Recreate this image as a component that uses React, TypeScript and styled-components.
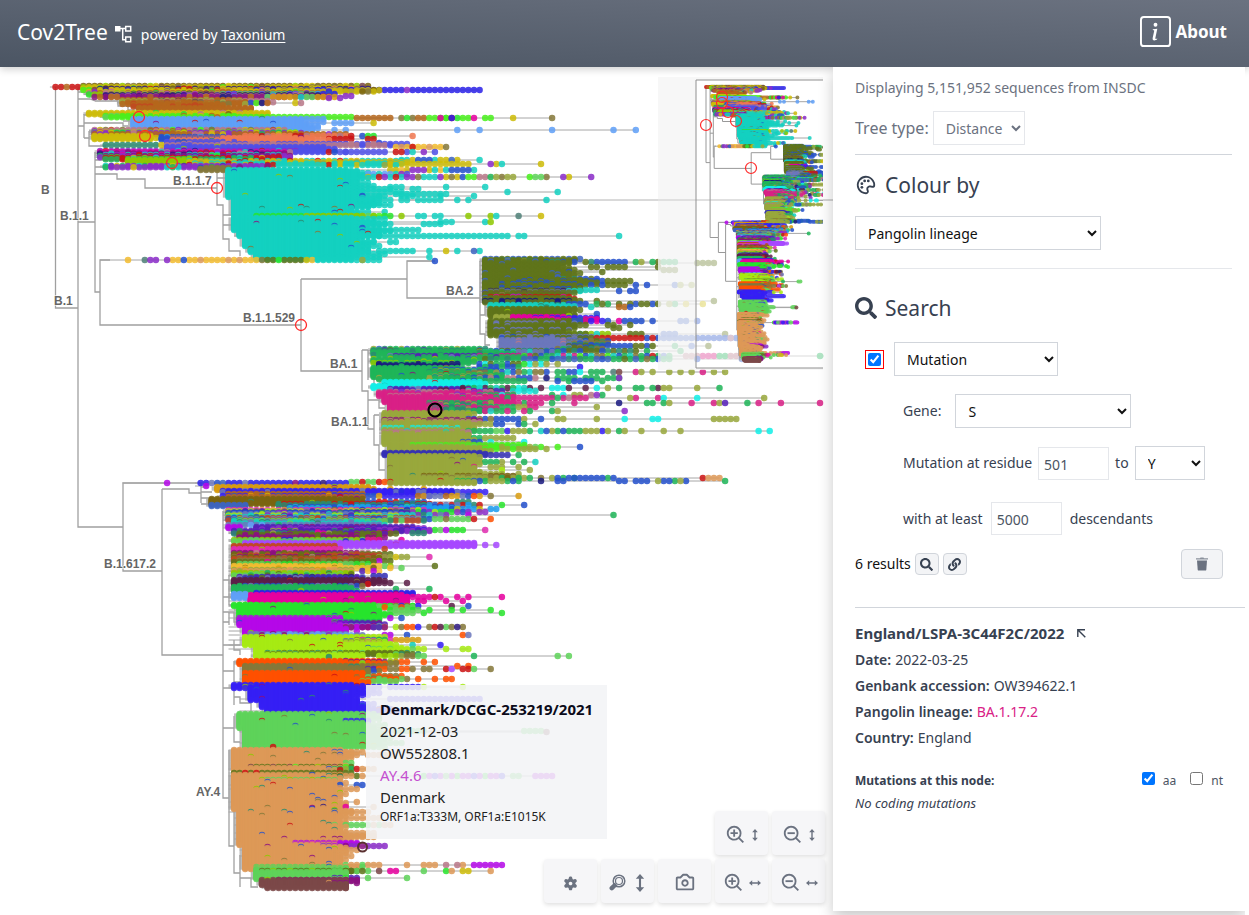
import React, { useState } from "react";
import styled, { createGlobalStyle, css } from "styled-components";
import { FaSearch, FaLink } from "react-icons/fa";
import { BiPalette, BiCamera, BiZoomIn, BiZoomOut } from "react-icons/bi";
import { BsInfoSquare } from "react-icons/bs";
import { TiCog } from "react-icons/ti";

/* ---------- tree data ---------- */

const COL = 5.58;
const ROOT_X = 55.5;
const ROOT_Y = 87;

const colours: Record<string, string> = {
  t: "#14d0c0", o: "#5f741b", g: "#20b558", p: "#d92186", a: "#98a83c",
  c: "#12efe6", y: "#cdbc08", b: "#5f9ff7", B: "#2b22e8", n: "#2450cc",
  v: "#5520b8", P: "#8b2cc8", M: "#b408e8", m: "#e6009e", G: "#28e42c",
  l: "#a6ea14", O: "#ff5000", k: "#85783a", S: "#3520f5", s: "#5ed35a",
  T: "#dd9857", R: "#cc1414", w: "#7c4848", W: "#5c2048", d: "#301a80",
  z: "#7a6410", Z: "#b4661c", Y: "#d89c10", f: "#f2bc30", q: "#6b77bc",
  i: "#4f50e8", j: "#2a8a70", r: "#f07850", x: "#4f8078", e: "#48f01c",
  L: "#a648ff", h: "#1c9cf0", u: "#b87888", N: "#1a1a80", D: "#3430b4",
  E: "#8ec800", H: "#8a1080", X: "#c04820", Q: "#3c64c0", A: "#e02cb0",
};

/* Dense clades: top, bottom, first column, last column, ragged edge, colours */
const clades = [
  "87 87 0 4 0 RZRRR", "86 90 5 52 6 yyyzekwEy", "89 92 8 56 4 yydrBRzk",
  "90 91 36 76 0 BBBBNBPz", "92 95 6 44 5 yEoPGZu", "94 97 9 47 4 dHhNvPu",
  "94 95 30 50 3 hhBhn", "97 98 7 40 6 dHPZyN", "97 98 38 49 2 tssaY",
  "100 104 12 32 4 ZkZZa", "101 103 18 38 4 uHGZN", "104 107 14 28 8 ZZZXZ",
  "108 109 15 34 3 ZZ", "113 115 6 34 16 yuyGyz", "116 118 9 30 8 yseGeZ",
  "117 118 30 53 0 eeGeeme", "118 118 54 60 0 ZZY", "119 127 14 44 6 bbbbb",
  "128 130 16 46 5 bbb", "130 133 7 40 12 yuXePyk", "133 135 7 44 14 uyZPrg",
  "136 139 7 17 2 yy", "137 140 19 28 4 hn", "136 137 34 53 4 RrRug", "138 142 21 44 6 rrrr",
  "142 143 20 30 8 nrij", "145 146 9 19 0 yjjjj", "144 146 20 60 6 iuiuu",
  "147 152 20 48 6 iiii", "151 155 8 40 6 PdRutHm", "156 158 8 42 8 HPvRGg",
  "158 160 9 36 16 RyEtgR", "159 162 13 24 4 EEE", "161 166 24 60 8 yyyyaytR",
  "166 168 9 30 20 PHvyPtg", "168 170 26 31 0 kk",
  "170 190 31 52 8 tttttt", "191 197 31 52 9 tttttt", "198 215 32 52 8 tttttt",
  "216 217 36 60 0 EesGE", "218 230 32 52 8 tttttt", "231 236 33 55 8 tttttt",
  "237 246 34 53 8 tttttt", "247 252 35 54 11 tttttt", "253 259 36 52 8 tttttt",
  "259 300 77 90 5 ooooooooooQ", "260 262 77 88 4 oooja", "280 290 80 93 7 oooon",
  "291 293 78 92 2 qoqdo", "294 296 77 90 3 ooouH", "297 298 78 92 0 RuRmR", "299 301 77 92 4 oooo",
  "301 303 77 92 3 NoNo", "305 308 78 91 3 tjtt", "309 316 78 91 4 ooooo",
  "317 318 79 81 0 a", "317 320 82 91 0 mm", "318 320 86 96 2 mmSno", "321 336 78 91 5 oooooooq",
  "337 339 80 95 4 qqoqn", "340 349 80 91 5 qqqqqu", "341 348 92 98 3 oojnk",
  "349 351 57 76 12 gjvagQo", "351 356 57 74 10 gggjg", "356 358 60 84 6 vggqv",
  "359 363 57 74 9 gEggg", "364 367 58 70 9 NNNgN", "368 377 57 72 5 ggggg",
  "370 379 68 76 6 gnakg", "378 380 58 76 6 gggga", "382 388 59 73 6 ccccc",
  "386 388 57 59 0 c", "389 391 60 74 3 WvWqp", "392 396 58 76 8 pppPu",
  "397 402 59 78 6 pppppp", "402 411 60 69 1 pppppp", "403 411 67 76 4 gpjap",
  "413 430 59 74 3 aaaaaaa", "420 423 59 75 2 ruaHa", "431 434 59 74 1 auaut",
  "428 430 59 72 0 caqc", "435 444 59 74 1 aaaaa", "445 447 64 80 6 eeees",
  "446 452 60 76 2 aaaaa", "453 455 59 74 6 DDDD", "456 483 60 75 2 aaaaaaa", "476 478 66 82 2 azka",
  "483 484 26 52 6 QvHqdnB", "482 483 53 60 0 RsRO", "487 490 29 56 4 YYYY",
  "491 493 30 70 4 SBSBq", "494 497 31 55 2 ZZZZ", "496 497 30 66 3 ZYnZyS",
  "499 504 28 54 2 zzzz", "505 506 28 34 0 Q", "504 506 40 66 6 jnjRoj",
  "507 510 42 70 4 hhnhth", "510 513 31 62 6 DvqrkAl", "513 518 31 60 10 qjlvPtn",
  "518 521 31 64 3 njqsnX", "521 524 32 54 6 tjtsq", "525 525 31 58 4 qtbgs",
  "527 528 31 33 0 M", "527 531 36 64 9 vvHvP", "531 534 32 56 6 jaojvm",
  "535 538 33 57 3 HHHoH", "540 542 32 55 4 ssEBs", "543 546 34 75 0 LLLL",
  "546 548 32 48 2 XXX", "549 552 32 48 4 AAAA", "553 557 32 56 5 zokuXH",
  "558 563 32 54 6 zkXmok", "564 565 32 56 2 GoGs", "566 569 32 50 2 ffYf", "568 568 33 56 4 fzof",
  "570 572 32 53 5 YTETa", "573 576 32 51 5 EgoEs", "577 579 33 54 4 ovdDq",
  "580 584 32 55 6 WWWW", "586 587 33 54 2 qgn", "587 591 32 52 3 ggg",
  "593 594 36 64 0 BBB", "595 602 35 62 4 mmmmm", "594 598 32 34 0 b",
  "605 606 32 36 0 G", "605 619 33 57 5 GGGGGG", "606 608 58 64 2 sGOs",
  "618 625 33 51 2 MMMMM", "626 633 34 51 2 MMMMM", "622 628 50 58 1 MgqvH", "634 636 35 52 10 qHPqb",
  "637 645 34 57 5 lllll", "640 645 52 58 1 lAQkl", "646 652 36 59 5 lllll", "653 655 38 62 3 josj", "654 657 36 54 3 lllll",
  "661 664 33 56 4 OOOO", "662 664 53 60 4 OkHs", "666 672 34 56 4 kkkk", "673 683 34 54 4 OOOOO", "676 682 54 60 3 OkOs",
  "685 688 32 52 5 SSSS", "687 700 35 53 7 SSSSS", "701 707 37 54 5 SSSS", "708 713 38 56 6 SSSS",
  "714 728 33 55 5 sssss", "729 747 34 57 4 sssss", "721 722 52 56 1 S",
  "750 758 32 50 5 TTTTTT", "759 770 32 50 3 TTTTTT", "767 768 35 53 2 Eweo", "773 774 32 53 0 oooRd",
  "775 800 32 50 3 TTTTTT", "780 781 37 50 1 EsEs", "801 809 32 50 4 TTTTTT", "810 830 33 50 4 TTTTTT",
  "831 845 33 50 3 TTTTTT", "836 837 49 57 1 TTT", "846 869 34 50 3 TTTTTT",
  "843 845 43 54 1 MHMA", "867 879 36 52 1 sssss", "871 872 37 54 1 oooE", "880 881 40 54 1 HHHH",
  "880 885 37 52 0 wwwww", "886 888 38 52 0 wwwww",
];

/* Long tip rows: height, column the branch starts at, dots */
const tips = [
  "103 34 35n 36e 37N 38Z 43y 44u", "118 34 62-71ekmGRZ 69-73GeB 74e 75m 77e 78e 82y 89k",
  "98 50 49P 51P", "96 48 52P 53P", "123 44 50-53b 57y", "130 44 50b 52b 72b 76b 89b 100b 104b",
  "136 50 55n 56-57G 64r", "139 46 49-53R 56-57R", "143 56 58n", "147 60 61-69fffTf 64R 70k", "152 48 52-59i 61-63iR 64t 66P 68i",
  "160 56 62-71nyQt 72y 76t", "164 56 60-74y 78P 79y 80t 87y", "170 50 60-70tyPf 70-75tn",
  "177 40 56-64yPRt 65-71tnPyk 72y 73n 74-75e 76-77Ru 78g 79-82ak 85-87yes 88k 91P 92y 96P",
  "174 44 56-63Ptib", "187 44 60-62t 70t 77t", "189 44 50-60t 64-65t", "192 44 54-62t 81t 90t", "194 44 61-70t", "196 40 58t 62-64t 69t 75t",
  "200 50 54-60t 62-63t 65-69t 72t 74t 88t", "205 40 54-57t 60t", "212 40 54-56t 59t",
  "216 33 46-55E 57E 62E 65-66t 68-69t 74E 78E 79t 83x 87y", "222 40 69-71t 77t 78E", "224 40 56-60t 66-69t",
  "230 40 54-60t 61-65t", "236 32 52-81t 83-84t 101t", "242 40 54-57t 60-61t", "251 40 58-64t 67t 70y 72t 75Q 76t",
  "257 40 56-58t 67t", "260 8 13f 16x 17-18P 20P 21-22f 23n 24-36ffffTf 37k 38-39o 40G 41-44o 45y 46f 47-58t 55a", "261 63 68n",
  "262 77 88-92noj 93n 95-97onj 98-102n 104g 105a 107g 108o 109-111g", "263 85 115-118o", "267 85 96-97o 99-102o 108o", "270 85 92-93o 109-111o", "272 80 90-92on 98o",
  "279 84 91-97ojn", "281 84 92-99on 100-103o", "285 84 94-98on 99-102o 104n 106n 111n 112a 114a", "290 84 94-97t", "291 84 92-94t 101n 103n 104n",
  "299 84 93R", "301 84 97o 118o", "304 84 92-95on 97-99og 101o 103-108on 110a 111g 113y 116y", "307 84 96t 101-102Z 103n", "314 84 97n",
  "321 84 88-92mo 93-99mSmn 101m 102-105n 107n 112-113n 115n", "325 84 93-95o 99-100o 103o", "328 84 92-93o 100-101o",
  "334 80 90-99ontE 103-105o 109-111n 120o", "338 80 90-96non 97-105R 106n 107R 108-123n 121u",
  "346 80 92-96on 100-103n 104-107on 111g 114n 117o", "349 80 90-98gjok", "351 70 76-104onj 106g 112g", "352 70 76-90qgtyn",
  "356 64 76-105gneotkpg 106-108Rgn 109n 110g 113-115gup 116-118p 119-120g 121-125up 137g", "359 64 74-104ngQjog 105-110ngk 115n 123n",
  "364 66 76-83gnoc 84-88caG 90a", "367 66 76-83gn 94S", "372 64 74-88gankt 90-93gn 94c 96-98g 100x 101w 104p 105a 107a 110a 112a 114a 116p 118a 120a",
  "378 64 74-86gnu 88N 90-93gn 95-97g 99-101g 101P", "381 64 70-84gng 90n 92-96ngn 98g", "388 64 72-85tcWg 87W 89-92Wgcc 95W 97c 99a 101g 104-105g 107g 108W 109-110a 115a 119g",
  "391 64 74-80vcWt 82-86ct", "395 64 76-82cg 89g 91c 93-94a 96-97uP 98g", "398 64 72-95ppppgu 103a 104p 108p 109c 115c 127a",
  "403 64 72-87ppgpa 89g 93p 101N 106-107g 109g 110a 114p 118p 119a 120v 124g 126p 130p 137p", "407 64 72-82gpg 83-86pa 97a",
  "411 64 74-82gpt 84-85pg 89g 90a 102P", "419 66 74-84ankn 87n 90-91a 97a 102c 107c 108c 118-122a", "424 66 76-80an 83n 84g 86a",
  "431 64 74-80gegs 81S 82-85ag 87t 88-93anag 94g 95-97a 98S 99a 101g 102a 105a 109a 112a 126c 128c", "438 60 75-79ag 80-82a", "442 60 73-76n 78c 84c",
  "447 62 74-87eesa 90e 94n", "449 62 76-86eea 88a", "455 60 74-81D 83g", "462 62 76-80ag 82g 84g 86t", "467 62 75p 78-80a 83a", "470 62 80l 85a",
  "474 62 76-80a 83a", "478 60 74-78ak 79-85azg 87k 89a 90-93ng 93-98n 99g 100n 116R 117-119T", "481 60 72-76ng 77-83agn 87N 90-91n 101-102n 104-106n 108a 109-110n 111g 112a 113n 120g",
  "483 12 20M", "486 25 27M", "489 56 60Y 66Y", "492 56 59-70SnSB 71-77S", "496 56 66-74ZnYq 75O 76Y 78k 83Y",
  "502 50 56-66nRjq 72-74j", "505 44 54-76nqhjR 80G 84n", "509 44 56-76hhnyh 78-79h", "512 44 54-70lARnGPh 71-74nPG 76-77P",
  "515 31 56-70jvPtq 74M 100g", "519 31 54-67nnnl 68-74ssk 75R 78O", "530 31 54-67vSPn 68-73sGM 77A", "533 31 58-60Rm 64-66j",
  "540 31 56-58m 62m", "545 31 60-75L 77L 79L", "549 31 59X", "557 31 55-60kXa 61-63ya 67A", "561 31 56-60okM", "566 31 55-60fEs 68o",
  "568 31 60f 62s", "571 31 55-58fMv", "576 31 57-59D", "583 31 56-60W 63W", "586 31 55k", "589 31 61g 67g",
  "597 31 62-65m 66-69mRm 72m 74m 80m", "601 31 65-66m 70m 73m", "606 31 60-65GkS 71W 74n", "610 31 60-65sG 67G 71G 73G 78G",
  "613 31 60-64s 66G 80G", "618 31 60M 62n", "627 31 52-57umM 58s 59f 61l 62k 63-64O 65S 67k 68R 69W 70s 71k 72d 73k",
  "631 31 54M", "635 31 59-60M 63n 73O 74q", "640 31 55-60gAQ 61-65Y", "645 31 58-61l 64t 69S", "649 31 55-66lls 70l 73-74l",
  "656 35 58-66asEkl 75g 90s 92s", "662 32 60-63Oly 66O 68O", "666 33 72O 74O", "669 33 56-60kvO 61-64kOk 66-67k 70R 71L 73-74R 75s 78k", "679 33 56-63OOks 65O 68O 70-71O",
  "687 33 60-66SlS 73l", "699 33 60-76SSS", "711 33 60-64S", "731 33 61-66s 84-87s", "732 33 88w", "743 33 58-62s",
  "752 33 50-53TQ 55T", "755 33 51n 56-60T", "763 33 52-53s", "769 31 49n 50-53sga 54R 55-57T", "776 31 50-55Toz 66-80MsGMS 82-83s 86-89M",
  "785 31 51n 54-55nT", "789 31 52-54T", "802 31 48n 54T", "807 31 48d 50-52mT 57T", "812 31 52-56T", "818 32 50-58T",
  "825 32 49j 50s 52-60Ts", "833 32 50-57T", "839 32 48-52TH 53T", "846 33 48-56PPHM 57-59P", "850 33 49n 52-54T", "856 33 50-53T",
  "865 35 52-55sT 56-58Ts 63T 66-68T 70u 72-73Tu 75-79M 80M", "867 35 49n 50-55ToTs", "871 35 50-56soss 58w 60m 61m 66s 70G 71T 73-74y 78T",
  "878 35 50-54kGv 56s 63s", "883 38 49T 50-52H 54H", "888 38 52w",
];

/* Elbow branches, as absolute moves on the tree plane */
const branches =
  "M55.5 87V308H78M78 88V527H123V483H201V503M123 527V571H162M162 489V655H223V798H229M162 489H189V493H201" +
  "M78 99H90L95 101M78 126H84M84 114V138M84 123H123V126H128M84 115H92M84 138H89V131M89 138V146H106" +
  "M95 101H118V106H128V110H134M78 88V92H86M123 121H130M89 131H95" +
  "M78 222H95M95 152V292H100V260H110M100 292V325H301M301 279V371H362M301 279H407V261H435M407 279V298H480V261M480 298V334H485V345H490M480 315H485V300" +
  "M95 174H117V179H145V188H217M217 172V205H223V239H229V251H240V256M95 160H105M95 167H108M217 178H228M223 215H234M223 225H234" +
  "M362 350V391H368V429H374V445H379V470H385M362 350H368M368 350V380M374 375V385H379M374 415V429M368 400H379V408H385M368 400V391M374 415H379" +
  "M201 487H208M201 492H212M201 498H215M201 504H215M223 511V655M229 575V605M229 605H234M229 612H234V622H240M229 625V612M234 640V650H240V655M223 645H240" +
  "M223 671H234V661M234 671V682H240M223 688H234V697H240V703H251V711M223 728H234V716M234 728V742H240M234 705V697" +
  "M229 750V846H234V855M234 810V873H240V887M240 855V878H251V887H258M223 580H229M223 597H234M223 612H229M223 622H229";

type Dot = { col: number; key: string };
type Row = { y: number; from: number; dots: Dot[] };

function makeRandom(seed: number) {
  let s = seed;
  return () => {
    s = (s * 1664525 + 1013904223) % 4294967296;
    return s / 4294967296;
  };
}

function buildRows(): Row[] {
  const rnd = makeRandom(41);
  const rows: Row[] = [];
  clades.forEach((line) => {
    const [a, b, c, d, e, keys] = line.split(" ");
    const [top, bottom, first, last, ragged] = [a, b, c, d, e].map(Number);
    const solid = new Set(keys).size === 1;
    for (let y = top; y <= bottom; y += solid ? 1 : 1.3) {
      const end = last + Math.round(ragged * rnd() * rnd());
      const main = keys[Math.floor(rnd() * keys.length)];
      const dots: Dot[] = [];
      for (let col = first; col <= end; col += 1) {
        const late = (col - first) / (end - first + 1);
        let key = main;
        if (solid) {
          if (rnd() < 0.01 + late * late * late * 0.03) key = "nkEHjR"[Math.floor(rnd() * 6)];
        } else if (rnd() < 0.4) key = keys[Math.floor(rnd() * keys.length)];
        dots.push({ col, key });
      }
      rows.push({ y, from: first - 1, dots });
    }
  });
  tips.forEach((line) => {
    const [y, from, ...tokens] = line.split(" ");
    const dots: Dot[] = [];
    tokens.forEach((token) => {
      const m = /^(\d+)(?:-(\d+))?([A-Za-z]+)$/.exec(token);
      if (!m) return;
      const first = Number(m[1]);
      const last = Number(m[2] || m[1]);
      for (let col = first; col <= last; col += 1) {
        dots.push({ col, key: m[3][Math.floor(rnd() * m[3].length)] });
      }
    });
    rows.push({ y: Number(y), from: Number(from), dots });
  });
  return rows.sort((p, q) => p.y - q.y);
}

const rows = buildRows();

type Scale = { x: (v: number) => number; y: (v: number) => number; dot: number };

const mainScale: Scale = { x: (v) => v, y: (v) => v, dot: 6.5 };
const miniScale: Scale = {
  x: (v) => 706 + (v - ROOT_X) * 0.184,
  y: (v) => 87 + (v - ROOT_Y) * 0.342,
  dot: 4,
};

const TreeDots = ({ scale }: { scale: Scale }) => {
  const px = (col: number) => scale.x(ROOT_X + col * COL).toFixed(1);
  const lines = rows
    .map((r) => {
      const end = Math.max(...r.dots.map((d) => d.col));
      return `M${px(r.from)} ${scale.y(r.y).toFixed(1)}H${px(end)}`;
    })
    .join("");
  return (
    <g fill="none">
      <path d={lines} stroke="#a6a6a6" strokeWidth={1} />
      {rows.map((r, i) => {
        const byKey: Record<string, string> = {};
        r.dots.forEach((d) => {
          byKey[d.key] = (byKey[d.key] || "") + `M${px(d.col)} ${scale.y(r.y).toFixed(1)}h0`;
        });
        return Object.keys(byKey).map((key) => (
          <path
            key={`${i}${key}`}
            d={byKey[key]}
            stroke={colours[key]}
            strokeOpacity={0.86}
            strokeWidth={scale.dot}
            strokeLinecap="round"
          />
        ));
      })}
    </g>
  );
};

const miniBranches = branches.replace(/([MLHV])([\d.]+)(?: ([\d.]+))?/g, (_, c, a, b) => {
  if (c === "H") return `H${miniScale.x(+a).toFixed(1)}`;
  if (c === "V") return `V${miniScale.y(+a).toFixed(1)}`;
  return `${c}${miniScale.x(+a).toFixed(1)} ${miniScale.y(+b).toFixed(1)}`;
});

const labels: [string, number, number][] = [
  ["B", 41, 194], ["B.1", 54, 305], ["B.1.1", 60, 220], ["B.1.1.7", 173, 185],
  ["B.1.1.529", 243, 322], ["BA.1", 330, 368], ["BA.2", 446, 295],
  ["BA.1.1", 331, 426], ["B.1.617.2", 104, 568], ["AY.4", 196, 796],
];

const hits = [[139, 117], [145, 136], [172, 163], [217, 188], [301, 325]];
const miniHits = [[706, 125], [722, 97], [722, 103], [728, 112], [736, 121], [751, 168]];

const TreeView = () => (
  <TreeSvg viewBox="0 67 833 848" role="img" aria-label="Phylogenetic tree">
    <path d={branches} fill="none" stroke="#a0a0a0" strokeWidth={1.3} />
    <path d="M400 200H833" stroke="#b4b4b4" />
    <TreeDots scale={mainScale} />
    {labels.map(([text, x, y]) => (
      <TreeLabel key={text} x={x} y={y}>{text}</TreeLabel>
    ))}
    {hits.map(([x, y]) => (
      <circle key={`${x}${y}`} cx={x} cy={y} r={5.5} fill="none" stroke="#ff2a2a" strokeWidth={1.3} />
    ))}
    <circle cx={435} cy={410} r={6.5} fill="none" stroke="#000" strokeWidth={2.2} />
    <circle cx={362.5} cy={847} r={4.5} fill="none" stroke="#5a3030" strokeWidth={2} />
    <path d="M658 77H823V370H658ZM696 80V368H823V80Z" fillRule="evenodd" fill="#f5f5f5" fillOpacity={0.8} />
    <path d="M696 80H823V368H696Z" fill="#fff" fillOpacity={0.6} />
    <path d="M658 200H833" stroke="#d0d0d0" />
    <svg x={658} y={77} width={165} height={293} viewBox="658 77 165 293">
      <path d={miniBranches} fill="none" stroke="#999" />
      <TreeDots scale={miniScale} />
      {miniHits.map(([x, y]) => (
        <circle key={`${x}${y}`} cx={x} cy={y} r={5.5} fill="none" stroke="#ff2a2a" strokeWidth={1.2} />
      ))}
    </svg>
    <path d="M823 80H696V368H823" fill="none" stroke="#909090" />
  </TreeSvg>
);

/* ---------- styles ---------- */

const GlobalStyle = createGlobalStyle`
  *, *::before, *::after { box-sizing: border-box; }
  body {
    margin: 0;
    background: #fff;
    color: #374151;
    font: 14px/24px "Noto Sans", "Open Sans", sans-serif;
  }
  button, input, select { font: inherit; color: inherit; margin: 0; }
  h1, h2, h3, p, dl, dd { margin: 0; font-weight: 400; }
`;

const Page = styled.div`
  display: flex;
  flex-direction: column;
  min-height: 100vh;
`;

const Header = styled.header`
  display: flex;
  align-items: center;
  justify-content: space-between;
  height: 67px;
  padding: 0 22px 4px 17px;
  color: #fff;
  background: linear-gradient(to top right, #4b5563, #6b7280);
  box-shadow: 0 2px 8px rgba(0, 0, 0, 0.2);
`;

const Brand = styled.div`
  display: flex;
  align-items: baseline;
  white-space: pre;
  a { color: #fff; text-underline-offset: 2px; }
  svg { margin: 4px 9px 0 7px; align-self: center; }
`;

const Title = styled.h1`
  font-size: 21px;
  line-height: 32px;
`;

const AboutButton = styled.button`
  display: flex;
  align-items: center;
  gap: 4px;
  padding: 0;
  border: 0;
  background: none;
  font-size: 17px;
  font-weight: 700;
  cursor: pointer;
`;

const Main = styled.main`
  display: flex;
  flex: 1;
  align-items: stretch;
`;

const TreePane = styled.section`
  position: relative;
  flex: 1;
  min-width: 0;
`;

const TreeSvg = styled.svg`
  display: block;
  width: 100%;
`;

const TreeLabel = styled.text`
  font: bold 12px "Liberation Sans", Arial, sans-serif;
  fill: #666;
  stroke: #fff;
  stroke-width: 1px;
  paint-order: stroke;
`;

const Tooltip = styled.div`
  position: absolute;
  left: 366px;
  top: 618px;
  padding: 13px 14px;
  background: rgba(243, 244, 246, 0.88);
  color: #222;
  font-size: 15px;
  line-height: 22px;
  white-space: nowrap;
`;

const TooltipName = styled.h2`
  font-size: 15px;
  line-height: 22px;
  font-weight: 700;
  color: #0b0b1a;
`;

const Lineage = styled.span<{ $colour: string }>`
  color: ${(p) => p.$colour};
`;

const TooltipNote = styled.p`
  font-size: 12px;
  line-height: 18px;
`;

const Tools = styled.div`
  position: absolute;
  right: 8px;
  bottom: 12px;
  display: grid;
  grid-template-columns: repeat(5, 53px);
  gap: 4px;
`;

const ToolButton = styled.button<{ $column?: number; $gap?: number }>`
  display: flex;
  align-items: center;
  justify-content: center;
  gap: ${(p) => p.$gap ?? 4}px;
  height: 44px;
  padding: 3px 0 0;
  border: 0;
  border-radius: 4px;
  background: #f6f6f8;
  color: #6b7280;
  box-shadow: 0 2px 4px rgba(0, 0, 0, 0.12);
  ${(p) => p.$column && css`grid-column: ${p.$column};`}
`;

const Sidebar = styled.aside`
  position: relative;
  flex: 0 0 412px;
  margin: 0 4px 4px 0;
  padding: 9px 0 0 22px;
  background: #fff;
  box-shadow: 0 6px 14px rgba(0, 0, 0, 0.22);
  clip-path: inset(0 0 -4px -16px);
`;

const Block = styled.section<{ $rule?: string }>`
  margin-right: 13px;
  border-bottom: ${(p) => (p.$rule ? `1px solid ${p.$rule}` : "0")};
`;

const Muted = styled.p<{ $large?: boolean }>`
  color: #6b7280;
  font-size: ${(p) => (p.$large ? 16 : 14)}px;
`;

const Line = styled.div<{ $indent?: number; $gap?: number; $top?: number }>`
  display: flex;
  align-items: center;
  gap: ${(p) => p.$gap ?? 4}px;
  margin-top: ${(p) => p.$top ?? 0}px;
  padding-left: ${(p) => p.$indent ?? 0}px;
`;

const Heading = styled.h2`
  display: flex;
  align-items: center;
  gap: 8px;
  font-size: 21px;
  line-height: 32px;
  svg { flex: none; width: 22px; }
`;

const Select = styled.select<{ $width: number; $muted?: boolean }>`
  width: ${(p) => p.$width}px;
  height: 34px;
  padding: 1px 3px 0 8px;
  border: 1px solid ${(p) => (p.$muted ? "#e5e7eb" : "#d1d5db")};
  border-radius: 0;
  background: #fff;
  color: ${(p) => (p.$muted ? "#6b7280" : "#111")};
`;

const Field = styled.input`
  width: 71px;
  height: 33px;
  padding: 2px 5px 0;
  border: 1px solid #e5e7eb;
  color: #4b5563;
`;

const Framed = styled.span`
  display: flex;
  margin-right: 6px;
  padding: 2px;
  border: 1px solid #ff0000;
`;

const Check = styled.input.attrs({ type: "checkbox" })`
  width: 13px;
  height: 13px;
  accent-color: #0075ff;
`;

const Results = styled.div`
  display: flex;
  align-items: center;
  gap: 4px;
  margin-top: 14px;
  padding-right: 9px;
  color: #111;
`;

const IconButton = styled.button<{ $large?: boolean }>`
  display: flex;
  align-items: center;
  justify-content: center;
  width: ${(p) => (p.$large ? 42 : 24)}px;
  height: ${(p) => (p.$large ? 30 : 22)}px;
  margin-left: ${(p) => (p.$large ? "auto" : "0")};
  padding: 0;
  border: 1px solid #d1d5db;
  border-radius: 4px;
  background: #f3f4f6;
  color: #374151;
`;

const Details = styled.section`
  margin-top: 28px;
  padding-top: 11px;
  border-top: 1px solid #d1d5db;
`;

const NodeName = styled.h3`
  display: flex;
  align-items: center;
  gap: 13px;
  font-size: 15px;
  line-height: 28px;
  font-weight: 700;
`;

const Facts = styled.dl`
  line-height: 26px;
  div { display: flex; gap: 4px; }
  dt { font-weight: 600; }
`;

const Mutations = styled.div`
  display: flex;
  align-items: center;
  margin: 18px 22px 0 0;
  font-size: 12px;
  h3 { flex: 1; font-size: 12px; font-weight: 700; }
`;

const CheckLabel = styled.label`
  display: flex;
  align-items: center;
  gap: 8px;
  margin-left: 14px;
  color: #4b5563;
  input { margin-bottom: 5px; }
`;

const Empty = styled.p`
  font-size: 13px;
  line-height: 20px;
  font-style: italic;
`;

/* ---------- small icons ---------- */

const TreeIcon = () => (
  <svg width="17" height="18" viewBox="0 0 17 18" fill="none" stroke="#fff" strokeWidth="1.5">
    <path d="M0 1h5.500v5.500H0z" fill="#fff" stroke="none" />
    <path d="M5 3.500h5M7.700 3.500v11.300H10" />
    <path d="M10.700 1.500h5v4.500h-5zM10.700 12h5v4.800h-5z" />
  </svg>
);

const VerticalArrow = ({ size }: { size: number }) => (
  <svg width={(size * 2) / 3} height={size} viewBox="0 0 8 12" fill="currentColor">
    <path d="M4 0L6.800 3.200H4.700V8.800H6.800L4 12L1.200 8.800H3.300V3.200H1.200Z" />
  </svg>
);

const HorizontalArrow = () => (
  <svg width="12" height="8" viewBox="0 0 12 8" fill="currentColor">
    <path d="M0 4L3.200 1.200V3.300H8.800V1.200L12 4L8.800 6.800V4.700H3.200V6.800Z" />
  </svg>
);

const NodeZoomIcon = () => (
  <svg width="17" height="18" viewBox="0 0 17 18" fill="none" stroke="currentColor">
    <circle cx="10" cy="7" r="5.800" strokeWidth="1.500" />
    <circle cx="10" cy="7" r="3.500" strokeWidth="1.200" />
    <path d="M5.500 11.500L2.800 14.200" strokeWidth="4.500" strokeLinecap="round" />
  </svg>
);

const TrashIcon = () => (
  <svg width="12" height="14" viewBox="0 0 12 14">
    <path d="M0 1.300H4L4.500.500H7.500L8 1.300H12V2.600H0Z" fill="#8a909b" />
    <path d="M1 3.600H11L10.300 12.700Q10.200 13.600 9.300 13.600H2.700Q1.800 13.600 1.700 12.700Z" fill="#6b7280" />
  </svg>
);

const CornerArrow = () => (
  <svg width="9" height="9" viewBox="0 0 9 9" fill="none" stroke="#374151" strokeWidth="1.400">
    <path d="M.8 8V.8H8M1 1L8.300 8.300" />
  </svg>
);

/* ---------- app ---------- */

export default function App() {
  const [enabled, setEnabled] = useState(true);
  const [residue, setResidue] = useState("501");
  const [minimum, setMinimum] = useState("5000");
  const [aa, setAa] = useState(true);
  const [nt, setNt] = useState(false);

  return (
    <>
      <GlobalStyle />
      <Page>
        <Header>
          <Brand>
            <Title>Cov2Tree</Title>
            <TreeIcon />
            <span>powered by <a href="#taxonium">Taxonium</a></span>
          </Brand>
          <AboutButton>
            <BsInfoSquare size={31} />
            About
          </AboutButton>
        </Header>
        <Main>
          <TreePane>
            <TreeView />
            <Tooltip role="tooltip">
              <TooltipName>Denmark/DCGC-253219/2021</TooltipName>
              <div>2021-12-03</div>
              <div>OW552808.1</div>
              <div><Lineage $colour="#c44fd0">AY.4.6</Lineage></div>
              <div>Denmark</div>
              <TooltipNote>ORF1a:T333M, ORF1a:E1015K</TooltipNote>
            </Tooltip>
            <Tools>
              <ToolButton $column={4} aria-label="Zoom in vertically">
                <BiZoomIn size={22} /><VerticalArrow size={12} />
              </ToolButton>
              <ToolButton $column={5} aria-label="Zoom out vertically">
                <BiZoomOut size={22} /><VerticalArrow size={12} />
              </ToolButton>
              <ToolButton aria-label="Settings"><TiCog size={22} /></ToolButton>
              <ToolButton $gap={8} aria-label="Toggle zoom direction">
                <NodeZoomIcon /><VerticalArrow size={18} />
              </ToolButton>
              <ToolButton aria-label="Take a screenshot"><BiCamera size={22} /></ToolButton>
              <ToolButton aria-label="Zoom in horizontally">
                <BiZoomIn size={22} /><HorizontalArrow />
              </ToolButton>
              <ToolButton aria-label="Zoom out horizontally">
                <BiZoomOut size={22} /><HorizontalArrow />
              </ToolButton>
            </Tools>
          </TreePane>
          <Sidebar>
            <Block $rule="#d1d5db">
              <Muted>Displaying 5,151,952 sequences from INSDC</Muted>
              <Line $top={11}>
                <Muted as="label" htmlFor="tree-type" $large>Tree type:</Muted>
                <Select id="tree-type" $width={92} $muted>
                  <option>Distance</option>
                </Select>
              </Line>
              <Line $top={9} />
            </Block>
            <Block $rule="#e5e7eb">
              <Line $top={14}>
                <Heading id="colour-by"><BiPalette size={22} />Colour by</Heading>
              </Line>
              <Line $top={15}>
                <Select aria-labelledby="colour-by" $width={246}>
                  <option>Pangolin lineage</option>
                </Select>
              </Line>
              <Line $top={18} />
            </Block>
            <Block>
              <Line $top={23}>
                <Heading><FaSearch size={22} />Search</Heading>
              </Line>
              <Line $top={18} $indent={10}>
                <Framed>
                  <Check aria-label="Enable search" checked={enabled} onChange={(e) => setEnabled(e.target.checked)} />
                </Framed>
                <Select aria-label="Search type" $width={164}>
                  <option>Mutation</option>
                </Select>
              </Line>
              <Line $top={18} $indent={48} $gap={14}>
                <label htmlFor="gene">Gene:</label>
                <Select id="gene" $width={176}>
                  <option>S</option>
                </Select>
              </Line>
              <Line $top={18} $indent={48} $gap={6}>
                <label htmlFor="residue">Mutation at residue</label>
                <Field id="residue" value={residue} onChange={(e) => setResidue(e.target.value)} />
                <label htmlFor="to-residue">to</label>
                <Select id="to-residue" $width={70}>
                  <option>Y</option>
                </Select>
              </Line>
              <Line $top={22} $indent={48} $gap={8}>
                <label htmlFor="minimum">with at least</label>
                <Field id="minimum" value={minimum} onChange={(e) => setMinimum(e.target.value)} />
                <span>descendants</span>
              </Line>
              <Results>
                6 results
                <IconButton aria-label="Zoom to results"><FaSearch size={13} /></IconButton>
                <IconButton aria-label="Copy link"><FaLink size={13} /></IconButton>
                <IconButton $large aria-label="Delete search"><TrashIcon /></IconButton>
              </Results>
            </Block>
            <Details>
              <NodeName>England/LSPA-3C44F2C/2022 <CornerArrow /></NodeName>
              <Facts>
                <div><dt>Date:</dt><dd>2022-03-25</dd></div>
                <div><dt>Genbank accession:</dt><dd>OW394622.1</dd></div>
                <div><dt>Pangolin lineage:</dt><dd><Lineage $colour="#d92186">BA.1.17.2</Lineage></dd></div>
                <div><dt>Country:</dt><dd>England</dd></div>
              </Facts>
              <Mutations>
                <h3>Mutations at this node:</h3>
                <CheckLabel><Check checked={aa} onChange={(e) => setAa(e.target.checked)} />aa</CheckLabel>
                <CheckLabel><Check checked={nt} onChange={(e) => setNt(e.target.checked)} />nt</CheckLabel>
              </Mutations>
              <Empty>No coding mutations</Empty>
            </Details>
          </Sidebar>
        </Main>
      </Page>
    </>
  );
}
